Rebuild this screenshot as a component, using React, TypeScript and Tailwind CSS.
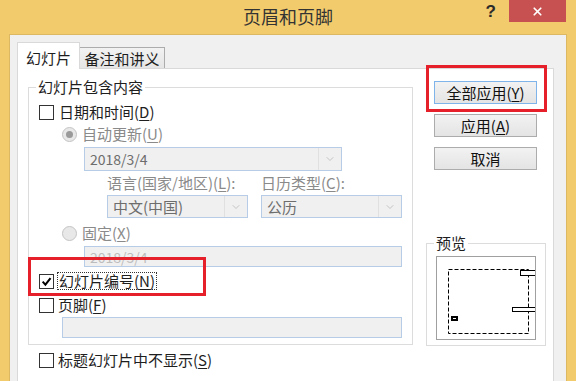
import { ChevronDown, X } from 'lucide-react'

function Mn({ k }: { k: string }) {
  return (
    <>
      (<span className="underline decoration-1 underline-offset-2">{k}</span>)
    </>
  )
}

function CheckBox({ checked = false }: { checked?: boolean }) {
  return (
    <span className="flex h-[15px] w-[15px] shrink-0 items-center justify-center border border-[#333333] bg-white">
      {checked && (
        <svg viewBox="0 0 12 12" className="h-[11px] w-[11px]">
          <path d="M1.8 6.2 L4.8 9.4 L10.4 2.4" stroke="#000" strokeWidth="2.2" fill="none" />
        </svg>
      )}
    </span>
  )
}

function Radio({ selected = false }: { selected?: boolean }) {
  return (
    <span className="flex h-[15px] w-[15px] shrink-0 items-center justify-center rounded-full border border-[#C4C4C4] bg-[#E8E8E8]">
      {selected && <span className="h-[7px] w-[7px] rounded-full bg-[#9A9A9A]" />}
    </span>
  )
}

function Select({ value, className = '' }: { value: string; className?: string }) {
  return (
    <div className={`flex border border-[#B7CCE6] bg-[#F0F0F0] ${className}`}>
      <span className="flex flex-1 items-center pl-[5px] text-[#6D6D6D]">{value}</span>
      <span className="flex w-[23px] items-center justify-center border-l border-[#E0E0E0]">
        <ChevronDown size={12} strokeWidth={1.5} className="text-[#B5B5B5]" />
      </span>
    </div>
  )
}

function Button({ label, primary = false }: { label: React.ReactNode; primary?: boolean }) {
  return (
    <button
      className={`flex h-[23px] w-[103px] items-center justify-center border bg-gradient-to-b from-[#F2F2F2] to-[#E4E4E4] text-[15px] leading-none text-[#111] ${
        primary ? 'border-[#7EB4EA]' : 'border-[#ACACAC]'
      }`}
    >
      {label}
    </button>
  )
}

export default function App() {
  return (
    <div className="relative flex h-[381px] w-[576px] flex-col overflow-hidden bg-[#F2CB6C] font-['Noto_Sans_CJK_SC',sans-serif] text-[15px] leading-[20px] text-[#1E1E1E]">
      {/* title bar */}
      <div className="grid h-[34px] shrink-0 grid-cols-[1fr_auto_1fr]">
        <div />
        <div className="pt-[4px] text-[18px] leading-[24px] text-[#333333]">页眉和页脚</div>
        <div className="flex justify-end">
          <span className="mr-[13px] pt-[1px] font-['Liberation_Sans',sans-serif] text-[17px] font-bold leading-[22px] text-[#2A2A2A]">?</span>
          <button className="mr-[10px] flex h-[22px] w-[57px] items-center justify-center bg-[#C75050]">
            <X size={13} strokeWidth={3.2} className="text-white" />
          </button>
        </div>
      </div>

      {/* dialog body, runs past the bottom edge of the shot */}
      <div className="mx-[9px] flex h-[380px] shrink-0 flex-col border-x border-t border-[#DDB862] bg-[#F0F0F0] pl-[7px] pt-[7px]">
        {/* tabs */}
        <div className="flex h-[26px] shrink-0 items-end">
          <div className="relative z-10 -mb-px flex h-[27px] w-[63px] items-center justify-center border border-b-0 border-[#D9D9D9] bg-white pt-[3px]">
            幻灯片
          </div>
          <div className="flex h-[21px] w-[85px] items-center justify-center border border-b-0 border-l-0 border-[#ACACAC] bg-gradient-to-b from-[#F2F2F2] to-[#E5E5E5] pt-[1px]">
            备注和讲义
          </div>
        </div>

        {/* tab panel */}
        <div className="flex w-[537px] flex-1 border border-[#D9D9D9] bg-white pl-[10px] pt-[8px]">
          {/* left column */}
          <div className="flex w-[385px] shrink-0 flex-col">
            <fieldset className="flex flex-col border border-[#DCDCDC] pb-[6px] pl-[10px]">
              <legend className="-ml-[3px] px-[2px] leading-[20px]">幻灯片包含内容</legend>

              <div className="mt-[5px] flex h-[20px] items-center gap-[5px]">
                <CheckBox />
                <span>
                  日期和时间<Mn k="D" />
                </span>
              </div>

              <div className="ml-[23px] mt-[2px] flex h-[20px] items-center gap-[5px] text-[#8A8A8A]">
                <Radio selected />
                <span>
                  自动更新<Mn k="U" />
                </span>
              </div>

              <Select value="2018/3/4" className="ml-[45px] mt-[3px] h-[24px] w-[258px] text-[14px]" />

              <div className="ml-[68px] flex h-[24px] items-center text-[#8A8A8A]">
                <span className="w-[154px]">
                  语言(国家/地区)<Mn k="L" />:
                </span>
                <span>
                  日历类型<Mn k="C" />:
                </span>
              </div>

              <div className="ml-[68px] flex gap-[13px]">
                <Select value="中文(中国)" className="h-[23px] w-[141px]" />
                <Select value="公历" className="h-[23px] w-[141px]" />
              </div>

              <div className="ml-[23px] mt-[5px] flex h-[20px] items-center gap-[5px] text-[#8A8A8A]">
                <Radio />
                <span>
                  固定<Mn k="X" />
                </span>
              </div>

              <div className="ml-[45px] mt-[3px] flex h-[21px] w-[318px] items-center border border-[#B7CCE6] bg-[#F0F0F0] pl-[5px] text-[14px] text-[#BDBDBD]">
                2018/3/4
              </div>

              <div className="mt-[4px] flex h-[20px] items-center gap-[3px]">
                <CheckBox checked />
                <span className="border border-dotted border-[#333] px-px leading-[16px]">
                  幻灯片编号<Mn k="N" />
                </span>
              </div>

              <div className="mt-[4px] flex h-[20px] items-center gap-[4px]">
                <CheckBox />
                <span>
                  页脚<Mn k="F" />
                </span>
              </div>

              <div className="ml-[23px] mt-[2px] h-[21px] w-[340px] border border-[#B7CCE6] bg-[#F0F0F0]" />
            </fieldset>

            <div className="ml-[11px] mt-[5px] flex h-[20px] items-center gap-[4px]">
              <CheckBox />
              <span>
                标题幻灯片中不显示<Mn k="S" />
              </span>
            </div>
          </div>

          {/* right column */}
          <div className="ml-[13px] flex w-[120px] shrink-0 flex-col">
            <div className="ml-[8px] mt-[4px] flex flex-col gap-[10px]">
              <Button primary label={<>全部应用<Mn k="Y" /></>} />
              <Button label={<>应用<Mn k="A" /></>} />
              <Button label="取消" />
            </div>

            <fieldset className="mt-[63px] border border-[#DCDCDC] pb-[5px] pl-[9px] pt-[3px]">
              <legend className="-ml-[2px] px-[2px] leading-[20px]">预览</legend>
              <div className="h-[84px] w-[100px] border border-[#A0A0A0] bg-white">
                <svg viewBox="0 0 98 82" className="h-[82px] w-[98px]">
                  <rect x="11.5" y="12.5" width="80" height="64" fill="none" stroke="#000" strokeWidth="1" strokeDasharray="4 2" />
                  <rect x="83.5" y="13.5" width="16" height="5" fill="#fff" stroke="#000" strokeWidth="1" />
                  <rect x="75.5" y="50.5" width="24" height="4" fill="#fff" stroke="#000" strokeWidth="1" />
                  <rect x="14" y="59" width="7" height="5" fill="#000" />
                  <rect x="16" y="61" width="3" height="1" fill="#fff" />
                </svg>
              </div>
            </fieldset>
          </div>
        </div>
      </div>

      {/* red annotation boxes */}
      <div className="pointer-events-none absolute left-[28px] top-[257px] h-[39px] w-[178px] border-[3px] border-[#E6202B]" />
      <div className="pointer-events-none absolute left-[426px] top-[65px] h-[47px] w-[121px] border-[3px] border-[#E6202B]" />
    </div>
  )
}
